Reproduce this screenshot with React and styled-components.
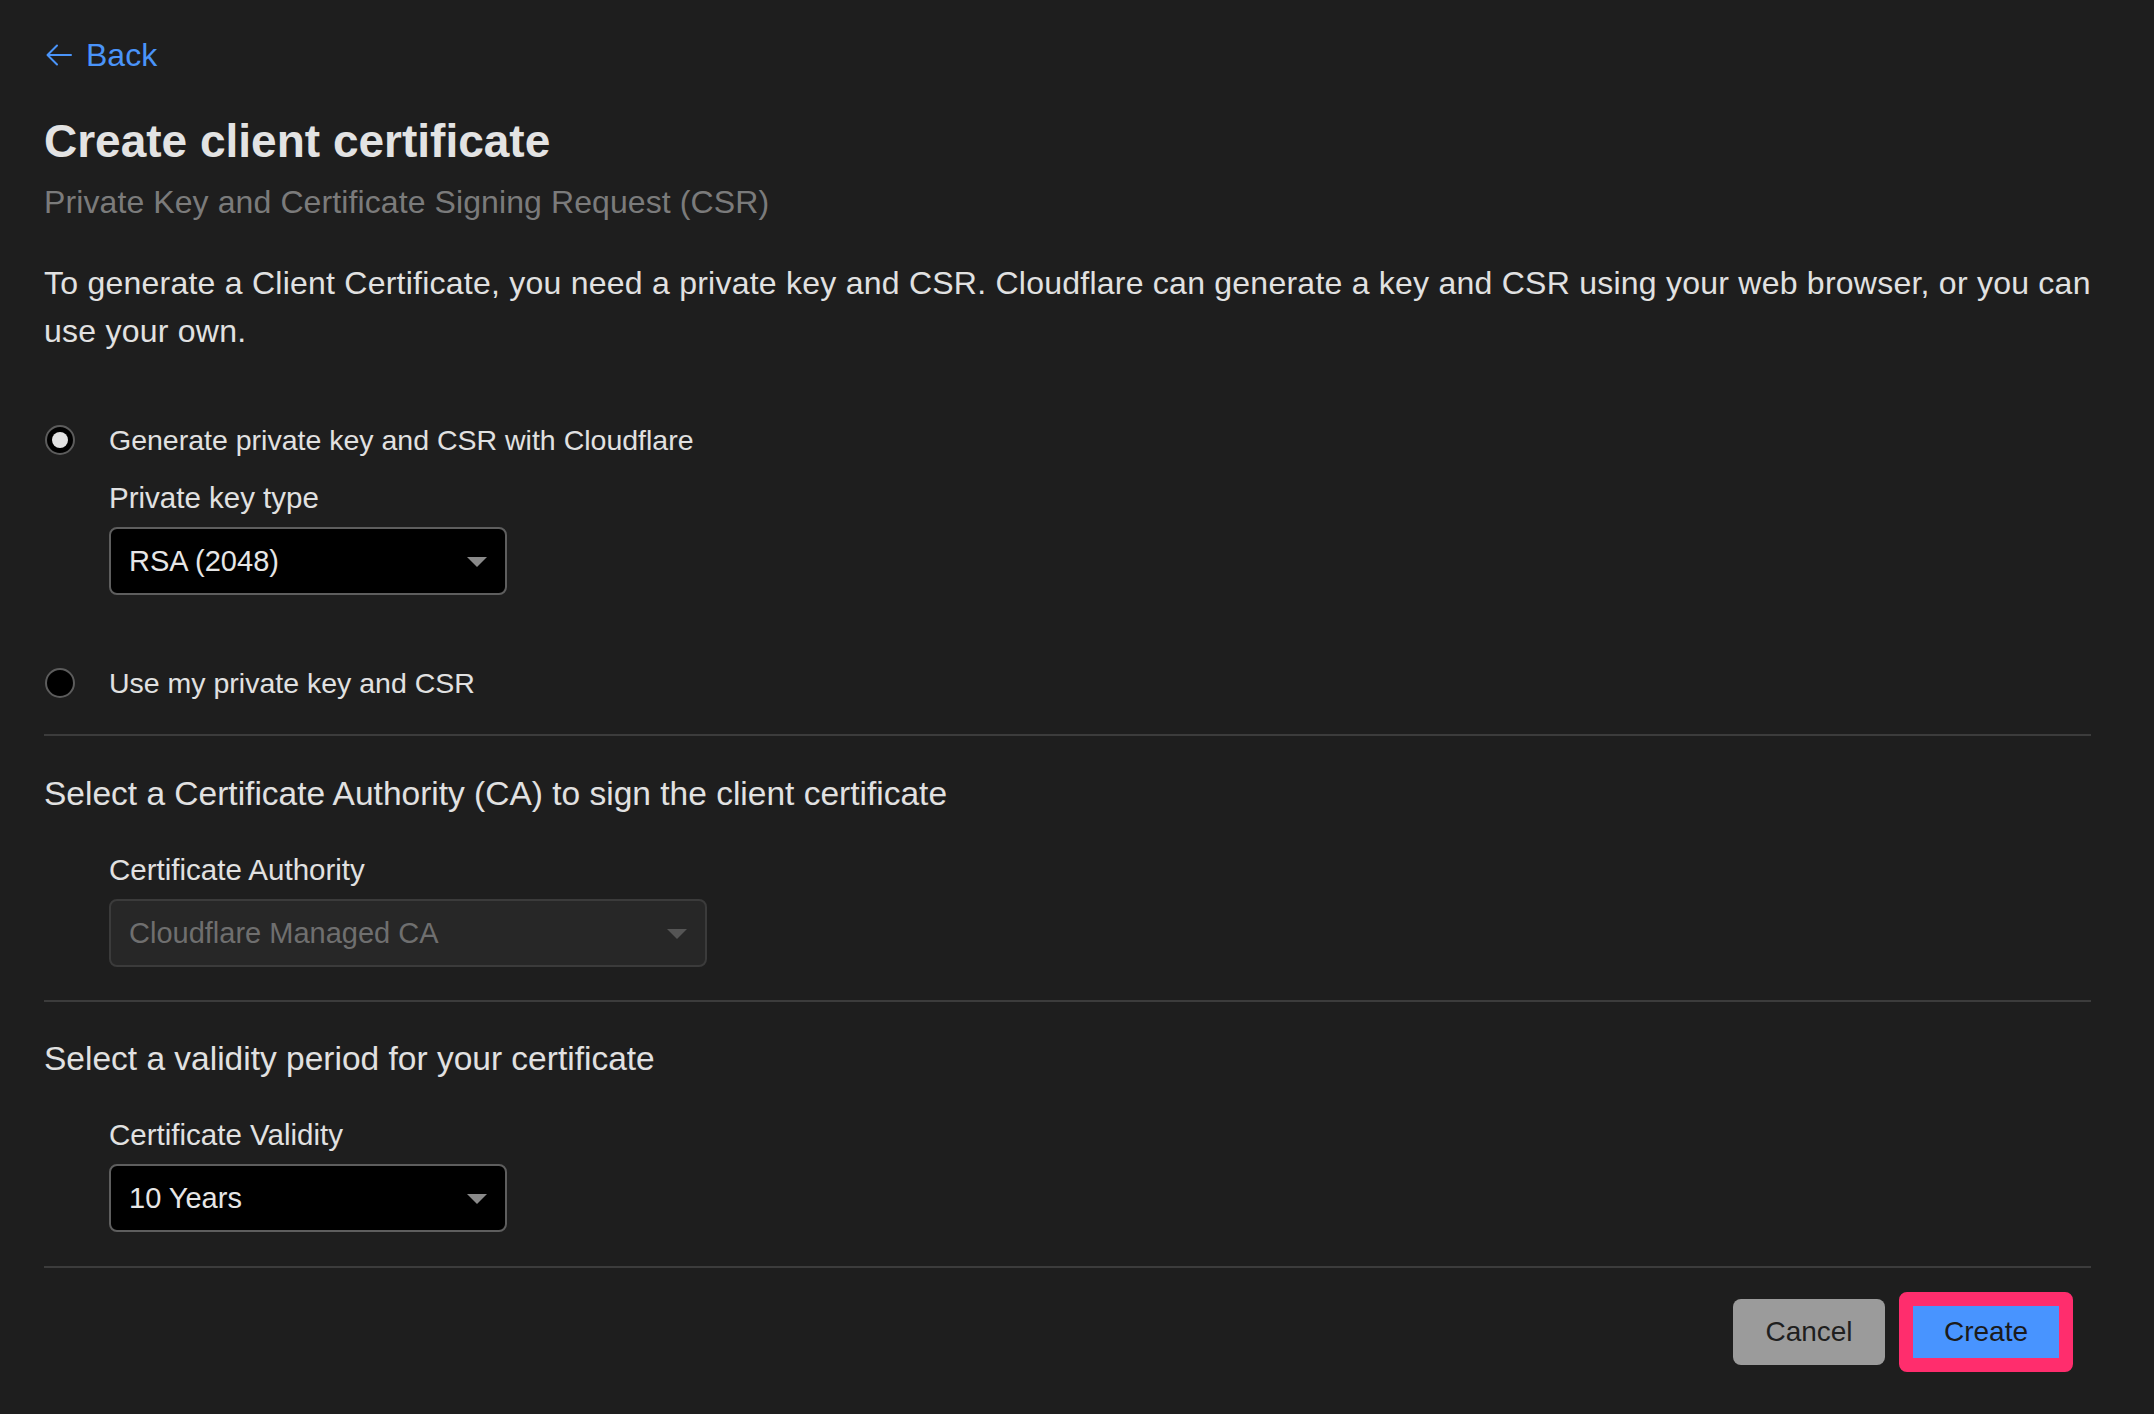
import React, { useState } from 'react'
import styled, { createGlobalStyle } from 'styled-components'

const GlobalStyle = createGlobalStyle`
  html, body {
    margin: 0;
    padding: 0;
    background: #1e1e1e;
  }
  body {
    font-family: 'Liberation Sans', Arial, sans-serif;
    color: #e1e1e1;
    -webkit-font-smoothing: antialiased;
  }
`

const Page = styled.div`
  min-height: 1414px;
  box-sizing: border-box;
  padding: 35px 63px 0 44px;
  display: flex;
  flex-direction: column;
  align-items: stretch;
`

const BackLink = styled.a`
  display: inline-flex;
  align-items: center;
  gap: 14px;
  align-self: flex-start;
  color: #4a94f9;
  font-size: 32px;
  line-height: 40px;
  text-decoration: none;
  cursor: pointer;
  margin-left: 2px;
`

const Title = styled.h1`
  margin: 38px 0 0;
  font-size: 46px;
  line-height: 56px;
  font-weight: 700;
  color: #e3e3e3;
`

const Subtitle = styled.div`
  margin-top: 13px;
  font-size: 32px;
  line-height: 40px;
  letter-spacing: 0.1px;
  color: #7b7b7b;
`

const Intro = styled.p`
  margin: 37px 0 0;
  font-size: 32px;
  line-height: 48px;
  letter-spacing: 0.24px;
  color: #e1e1e1;
`

const RadioRow = styled.label`
  display: flex;
  align-items: center;
  gap: 34px;
  margin-top: ${p => p.$top}px;
  font-size: 28.5px;
  line-height: 36px;
  color: #e1e1e1;
  cursor: pointer;
`

const RadioDot = styled.span`
  width: 30px;
  height: 30px;
  box-sizing: border-box;
  margin-left: 1px;
  border-radius: 50%;
  border: 2px solid #5c5c5c;
  background: #000;
  display: flex;
  align-items: center;
  justify-content: center;
  flex-shrink: 0;

  &::after {
    content: '';
    width: 16px;
    height: 16px;
    border-radius: 50%;
    background: #e2e2e2;
    display: ${p => (p.$checked ? 'block' : 'none')};
  }
`

const Field = styled.div`
  margin-top: ${p => p.$top}px;
  margin-left: 65px;
  display: flex;
  flex-direction: column;
  align-items: flex-start;
  gap: 11px;
`

const FieldLabel = styled.div`
  font-size: 29.5px;
  line-height: 36px;
  color: #e1e1e1;
`

const SelectBox = styled.div`
  width: ${p => p.$width}px;
  height: 68px;
  box-sizing: border-box;
  border-radius: 8px;
  border: 2px solid ${p => (p.$disabled ? '#3b3b3b' : '#5e5e5e')};
  background: ${p => (p.$disabled ? '#272727' : '#000')};
  color: ${p => (p.$disabled ? '#6f6f6f' : '#e6e6e6')};
  display: flex;
  align-items: center;
  justify-content: space-between;
  padding: 0 18px 0 18px;
  font-size: 29px;
  cursor: ${p => (p.$disabled ? 'not-allowed' : 'pointer')};
`

const Caret = styled.span`
  width: 0;
  height: 0;
  border-left: 10px solid transparent;
  border-right: 10px solid transparent;
  border-top: 10px solid ${p => (p.$disabled ? '#555' : '#8a8a8a')};
  margin-top: 1px;
`

const Divider = styled.hr`
  margin: ${p => p.$top}px 0 0;
  border: 0;
  height: 2px;
  background: #3c3c3c;
`

const SectionHeading = styled.h2`
  margin: ${p => p.$top}px 0 0;
  font-size: 33.5px;
  line-height: 40px;
  font-weight: 400;
  color: #e1e1e1;
`

const Actions = styled.div`
  margin-top: 24px;
  display: flex;
  justify-content: flex-end;
  align-items: center;
  gap: 14px;
  padding-right: 18px;
`

const CancelButton = styled.button`
  width: 152px;
  height: 66px;
  border: 0;
  border-radius: 8px;
  background: #9b9b9b;
  color: #1f1f1f;
  font-family: inherit;
  font-size: 28px;
  cursor: pointer;
`

const Highlight = styled.div`
  border: 14px solid #ff2d6d;
  border-radius: 8px;
  display: flex;
`

const CreateButton = styled.button`
  width: 146px;
  height: 52px;
  border: 0;
  background: #4894ff;
  color: #1b1b1b;
  font-family: inherit;
  font-size: 28px;
  padding: 0;
  cursor: pointer;
`

const BackArrow = () => (
  <svg width="26" height="22" viewBox="0 0 26 22" fill="none" stroke="currentColor" strokeWidth="2" strokeLinecap="round" strokeLinejoin="round">
    <path d="M25 11H2" />
    <path d="M11 1.5L1.5 11L11 20.5" />
  </svg>
)

const Select = ({ value, width, disabled }) => (
  <SelectBox $width={width} $disabled={disabled}>
    <span>{value}</span>
    <Caret $disabled={disabled} />
  </SelectBox>
)

const App = () => {
  const [mode, setMode] = useState('cloudflare')

  return (
    <>
      <GlobalStyle />
      <Page>
        <BackLink>
          <BackArrow />
          Back
        </BackLink>
        <Title>Create client certificate</Title>
        <Subtitle>Private Key and Certificate Signing Request (CSR)</Subtitle>
        <Intro>
          To generate a Client Certificate, you need a private key and CSR. Cloudflare can generate a key and CSR using your web browser, or you can use your own.
        </Intro>

        <RadioRow $top={67} onClick={() => setMode('cloudflare')}>
          <RadioDot $checked={mode === 'cloudflare'} />
          Generate private key and CSR with Cloudflare
        </RadioRow>
        <Field $top={22}>
          <FieldLabel>Private key type</FieldLabel>
          <Select value="RSA (2048)" width={398} />
        </Field>
        <RadioRow $top={70} onClick={() => setMode('own')}>
          <RadioDot $checked={mode === 'own'} />
          Use my private key and CSR
        </RadioRow>

        <Divider $top={33} />
        <SectionHeading $top={38}>Select a Certificate Authority (CA) to sign the client certificate</SectionHeading>
        <Field $top={38}>
          <FieldLabel>Certificate Authority</FieldLabel>
          <Select value="Cloudflare Managed CA" width={598} disabled />
        </Field>

        <Divider $top={33} />
        <SectionHeading $top={37}>Select a validity period for your certificate</SectionHeading>
        <Field $top={38}>
          <FieldLabel>Certificate Validity</FieldLabel>
          <Select value="10 Years" width={398} />
        </Field>

        <Divider $top={34} />
        <Actions>
          <CancelButton>Cancel</CancelButton>
          <Highlight>
            <CreateButton>Create</CreateButton>
          </Highlight>
        </Actions>
      </Page>
    </>
  )
}

export default App
